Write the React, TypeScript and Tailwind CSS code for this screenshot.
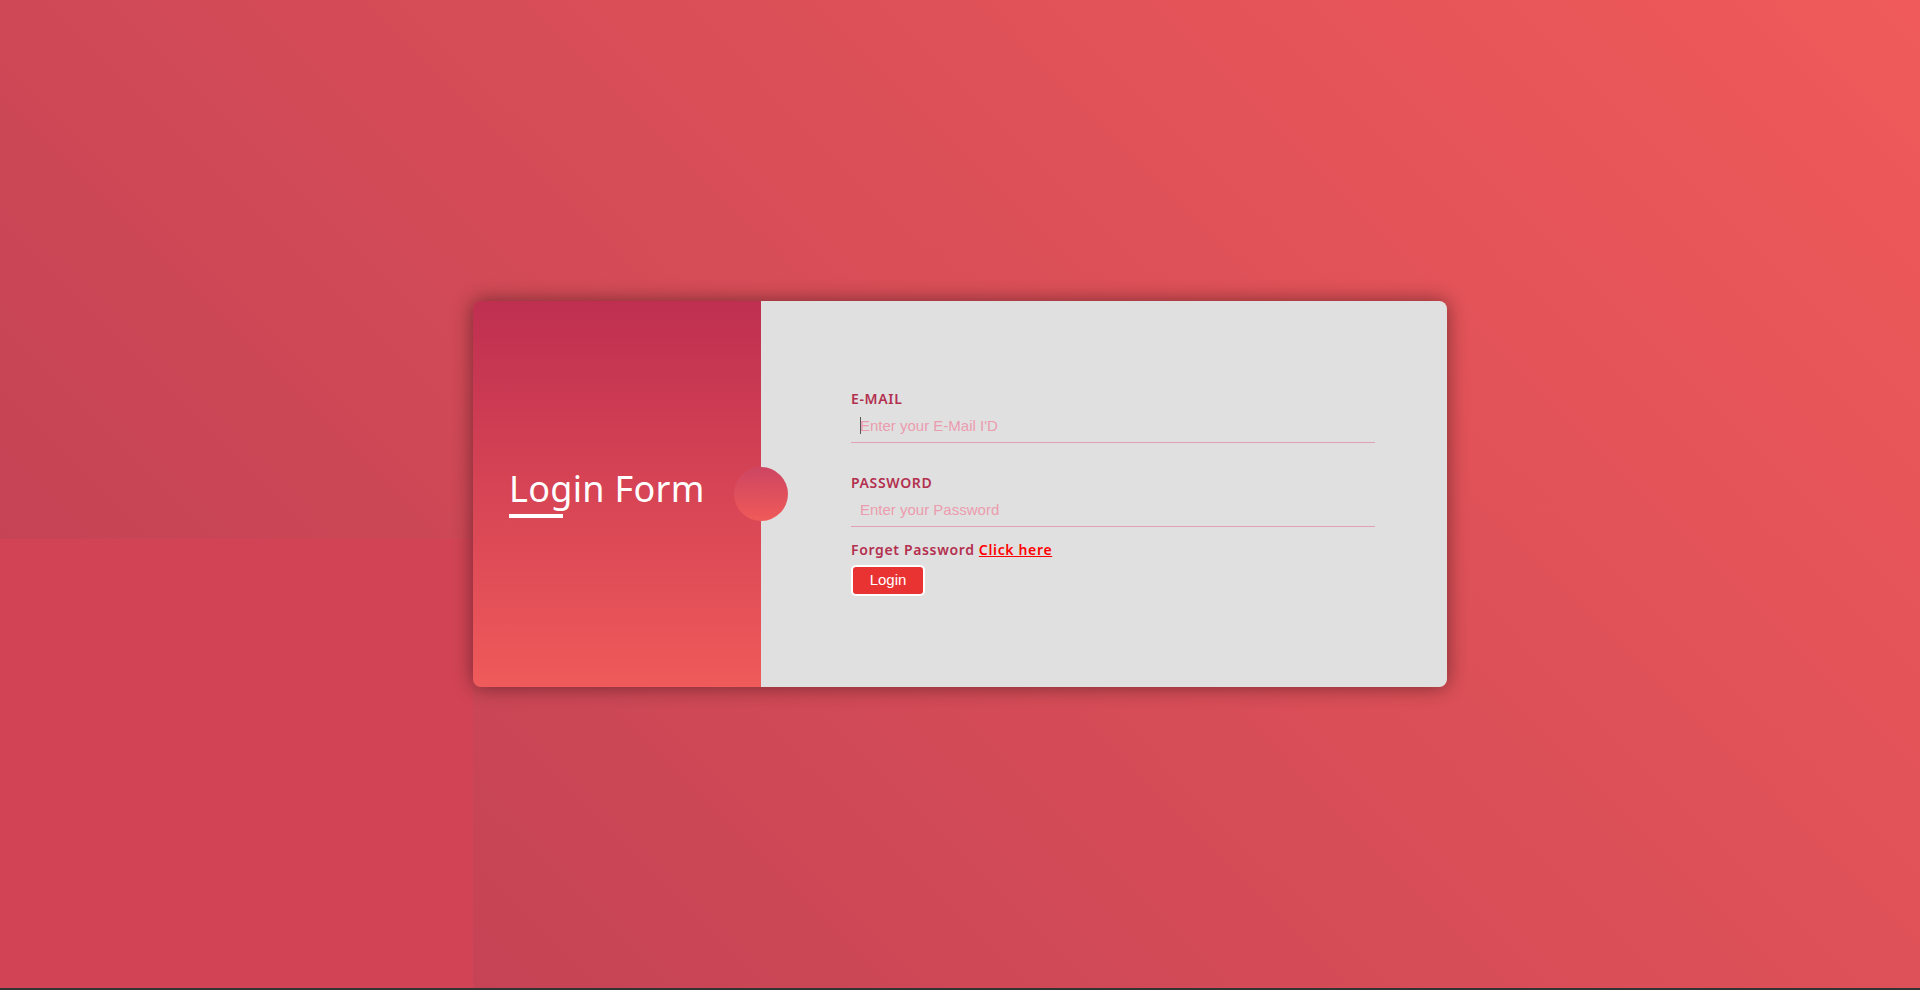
export default function App() {
  const label =
    "text-[14px] leading-[20px] font-semibold tracking-[0.65px] text-[#b3304f] font-['Noto_Sans',sans-serif]";
  const input =
    "block w-[524px] h-[34px] pl-[9px] bg-transparent border-b border-[#e0a1b2] focus:border-[#e0a1b2] outline-none text-[15px] text-[#555] font-['Liberation_Sans',Arial,sans-serif] placeholder:text-[#eb9cae] caret-[#555]";
  return (
    <div className="w-[1920px] h-[990px] flex flex-col overflow-hidden">
      <div className="grid h-[988px] bg-[linear-gradient(45deg,#bd3f54,#f05a5a)]">
        <div className="col-start-1 row-start-1 flex flex-col">
          <div className="h-[539px]" />
          <div className="flex-1 w-[473px] bg-[#d24455]" />
        </div>
        <div className="col-start-1 row-start-1 flex items-center justify-center">
          <div className="w-[974px] h-[386px] flex rounded-lg shadow-[0_0_20px_rgba(0,0,0,0.45)]">
            <div className="relative w-[288px] rounded-l-lg bg-[linear-gradient(to_bottom,#bf2f50,#ef5a5a)] flex flex-col justify-center pl-[36px]">
              <h1 className="text-white text-[36px] leading-[36px] font-normal tracking-[0.3px] font-['Noto_Sans',sans-serif]">
                Login Form
              </h1>
              <div className="mt-[7px] w-[54px] h-[4px] bg-white" />
              <div className="absolute z-10 right-[-27px] top-[166px] w-[54px] h-[54px] rounded-full bg-[linear-gradient(to_bottom,#cd4562,#f05a58)]" />
            </div>
            <div className="flex-1 rounded-r-lg bg-[#e0e0e0] flex flex-col pt-[88px] pl-[90px]">
              <label className={label}>E-MAIL</label>
              <div className="relative">
                <input className={input} type="text" placeholder="Enter your E-Mail I'D" />
                <span className="absolute left-[9px] top-[8px] w-[1px] h-[17px] bg-[#555]" />
              </div>
              <label className={label + " mt-[30px]"}>PASSWORD</label>
              <input className={input} type="password" placeholder="Enter your Password" />
              <div className={label + " mt-[13px]"}>
                Forget Password{" "}
                <a href="#" className="text-[#ff0000] underline">
                  Click here
                </a>
              </div>
              <button className="mt-[5px] w-[74px] h-[31px] rounded-[5px] border-2 border-white bg-[#e93333] text-white text-[15px] font-['Liberation_Sans',Arial,sans-serif]">
                Login
              </button>
            </div>
          </div>
        </div>
      </div>
      <div className="h-[2px] bg-[#333]" />
    </div>
  );
}
